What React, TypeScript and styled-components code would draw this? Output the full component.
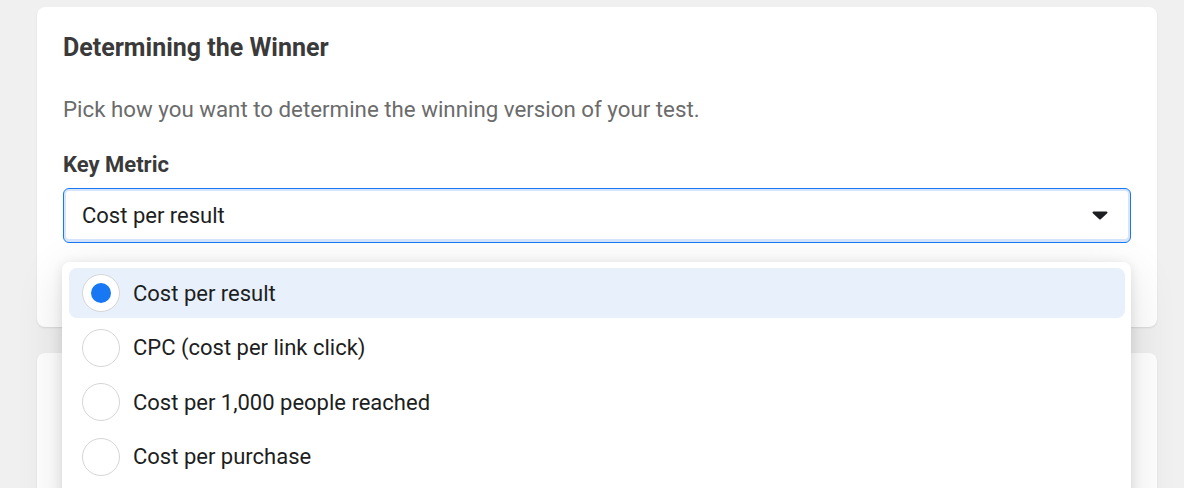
import styled, { createGlobalStyle } from "styled-components"

const GlobalStyle = createGlobalStyle`
  body {
    margin: 0;
    background: #f0f0f0;
    font-family: Roboto, "Liberation Sans", Arial, sans-serif;
    color: #1c1e21;
  }
`

const options = [
  "Cost per result",
  "CPC (cost per link click)",
  "Cost per 1,000 people reached",
  "Cost per purchase",
]

const Page = styled.div`
  height: 488px;
  overflow: hidden;
  padding: 7px 27px 0 37px;
  display: flex;
  flex-direction: column;
  gap: 26px;
`

const Card = styled.div<{ $tall?: boolean }>`
  flex-shrink: 0;
  background: #fff;
  border-radius: 8px;
  box-shadow: 0 1px 2px rgba(0, 0, 0, 0.1);
  padding: 26px 26px 0 26px;
  height: ${({ $tall }) => ($tall ? "300px" : "320px")};
  box-sizing: border-box;
  position: relative;
`

const Title = styled.h2`
  margin: 0;
  font-size: 25px;
  font-weight: 700;
  color: #3a3a3a;
  line-height: 30px;
`

const Description = styled.p`
  margin: 32px 0 0;
  font-size: 22.3px;
  color: #6b6b6b;
  line-height: 28px;
`

const Label = styled.div`
  margin-top: 28px;
  font-size: 22px;
  font-weight: 700;
  color: #3a3a3a;
  line-height: 28px;
`

const SelectWrap = styled.div`
  position: relative;
  margin-top: 9px;
  z-index: 2;
`

const Select = styled.div`
  height: 55px;
  box-sizing: border-box;
  border: 1px solid #1877f2;
  border-radius: 6px;
  box-shadow: inset 0 0 0 2px #d6e5fb, inset 0 -1px 0 2px #d6e5fb;
  display: flex;
  align-items: center;
  justify-content: space-between;
  padding: 0 22px 0 18px;
  font-size: 22px;
  background: #fff;
`

const Menu = styled.div`
  position: absolute;
  top: 74px;
  left: -1px;
  right: 0;
  background: #fff;
  border-radius: 8px;
  padding: 6px 6px 40px 7px;
  box-shadow: 0 2px 12px rgba(0, 0, 0, 0.1), 0 12px 48px rgba(0, 0, 0, 0.12);
  display: flex;
  flex-direction: column;
  gap: 4.5px;
`

const Item = styled.div<{ $active?: boolean }>`
  height: 50px;
  display: flex;
  align-items: center;
  gap: 13px;
  padding-left: 13px;
  border-radius: 8px;
  background: ${({ $active }) => ($active ? "#e8f0fc" : "transparent")};
  font-size: 22px;
`

const Radio = styled.span<{ $checked?: boolean }>`
  width: 38px;
  height: 38px;
  box-sizing: border-box;
  border-radius: 50%;
  border: 1px solid #d6d6d6;
  background: #fff;
  display: flex;
  align-items: center;
  justify-content: center;

  &::after {
    content: "";
    width: 20px;
    height: 20px;
    border-radius: 50%;
    background: #1877f2;
    display: ${({ $checked }) => ($checked ? "block" : "none")};
  }
`

const Caret = () => (
  <svg width="16" height="9" viewBox="0 0 16 9">
    <path d="M1.5 0.5h13a1 1 0 0 1 .7 1.7L8.7 8.2a1 1 0 0 1-1.4 0L.8 2.2A1 1 0 0 1 1.5.5z" fill="#1c1e21" />
  </svg>
)

const App = () => (
  <>
    <GlobalStyle />
    <Page>
      <Card>
        <Title>Determining the Winner</Title>
        <Description>Pick how you want to determine the winning version of your test.</Description>
        <Label>Key Metric</Label>
        <SelectWrap>
          <Select>
            <span>Cost per result</span>
            <Caret />
          </Select>
          <Menu>
            {options.map((o, i) => (
              <Item key={o} $active={i === 0}>
                <Radio $checked={i === 0} />
                {o}
              </Item>
            ))}
          </Menu>
        </SelectWrap>
      </Card>
      <Card $tall />
    </Page>
  </>
)

export default App
